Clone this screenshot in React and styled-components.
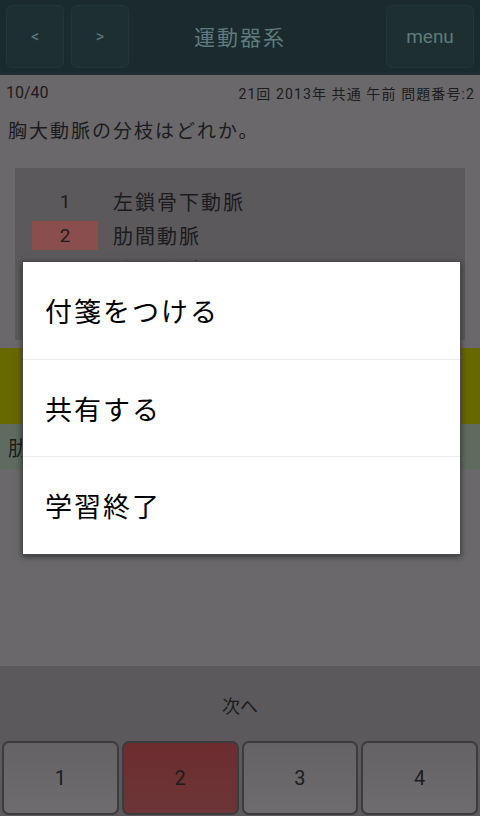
import styled, { createGlobalStyle } from "styled-components";

const GlobalStyle = createGlobalStyle`
  html, body {
    margin: 0;
    padding: 0;
    background: #6a686b;
  }
  * { box-sizing: border-box; }
`

const Screen = styled.div`
  position: relative;
  width: 480px;
  height: 816px;
  overflow: hidden;
  display: flex;
  flex-direction: column;
  background: #6a686b;
  font-family: Roboto, "Noto Sans CJK JP", sans-serif;
  color: #1c1b1d;
`
const Header = styled.div`
  height: 75px;
  background: #1b2a2d;
  border-bottom: 3px solid #1f3034;
  display: grid;
  grid-template-columns: 123px 1fr 123px;
  align-items: center;
  padding: 0 6px;
`
const NavGroup = styled.div`
  display: flex;
  gap: 7px;
  justify-content: ${p => (p.$right ? "flex-end" : "flex-start")};
`
const HeadButton = styled.div`
  width: ${p => p.$w}px;
  height: 63px;
  margin-top: 1px;
  border-radius: 6px;
  background: #1e2f32;
  border: 1px solid #22353a;
  display: flex;
  align-items: center;
  justify-content: center;
  color: #5e7b7e;
  font-size: ${p => p.$fs || 16}px;
`
const Title = styled.div`
  text-align: center;
  color: #5e7b7e;
  font-size: 21px;
  letter-spacing: 2px;
`
const InfoRow = styled.div`
  display: flex;
  justify-content: space-between;
  padding: 8px 6px 0;
  font-size: 14px;
  height: 28px;
  & > span + span { letter-spacing: 1.1px; margin-right: -1px; }
  & > span:first-child { font-size: 16px; }
`
const Question = styled.div`
  padding: 13px 8px 0;
  font-size: 19px;
  letter-spacing: 2px;
  height: 62px;
`
const Card = styled.div`
  margin: 3px 15px 0;
  height: 172px;
  background: #5b595c;
  padding-top: 16px;
`
const OptionRow = styled.div`
  display: flex;
  align-items: center;
  height: 34px;
  margin-left: 17px;
  font-size: 20px;
`
const OptNum = styled.div`
  width: 66px;
  height: 29px;
  display: flex;
  align-items: center;
  justify-content: center;
  font-size: 19px;
  background: ${p => (p.$sel ? "#8a4e4e" : "transparent")};
`
const OptText = styled.div`
  margin-left: 15px;
  letter-spacing: 2px;
`
const YellowBar = styled.div`
  margin-top: 8px;
  height: 76px;
  background: #686800;
`
const GreenBar = styled.div`
  height: 46px;
  background: #5e6b5e;
  display: flex;
  align-items: center;
  padding-left: 8px;
  font-size: 20px;
  letter-spacing: 2px;
`
const Spacer = styled.div`
  flex: 1;
`
const NextBar = styled.div`
  height: 75px;
  background: #5b595c;
  display: flex;
  align-items: center;
  justify-content: center;
  font-size: 18px;
  padding-top: 2px;
`
const AnswerRow = styled.div`
  height: 75px;
  display: grid;
  grid-template-columns: repeat(4, 1fr);
  gap: 3px;
  padding: 0 2px 1px;
  background: #5b595c;
`
const AnswerButton = styled.div`
  border: 2px solid #3c3b3e;
  border-radius: 7px;
  background: ${p => (p.$sel ? "linear-gradient(#6c2d2f, #6c3537)" : "linear-gradient(#646265, #6e6c6f)")};
  display: flex;
  align-items: center;
  justify-content: center;
  font-size: 20px;
`
const Overlay = styled.div`
  position: absolute;
  inset: 0;
  display: flex;
  justify-content: center;
  padding-top: 261px;
`
const Dialog = styled.div`
  width: 439px;
  height: 294px;
  margin-left: 3px;
  background: #ffffff;
  border: 1px solid #4a494c;
  box-shadow: 0 2px 6px rgba(0, 0, 0, 0.5);
  display: flex;
  flex-direction: column;
`
const DialogItem = styled.div`
  flex: 1;
  display: flex;
  align-items: center;
  padding-left: 22px;
  font-size: 27px;
  letter-spacing: 2px;
  color: #000;
  font-family: "Noto Sans CJK JP", sans-serif;
  & + & {
    border-top: 1px solid #ececec;
  }
`

const options = ["左鎖骨下動脈", "肋間動脈", "腕頭動脈"]

export default function App() {
  return (
    <>
      <GlobalStyle />
      <Screen>
        <Header>
          <NavGroup>
            <HeadButton $w={58}>&lt;</HeadButton>
            <HeadButton $w={58}>&gt;</HeadButton>
          </NavGroup>
          <Title>運動器系</Title>
          <NavGroup $right>
            <HeadButton $w={88} $fs={19}>menu</HeadButton>
          </NavGroup>
        </Header>
        <InfoRow>
          <span>10/40</span>
          <span>21回 2013年 共通 午前 問題番号:2</span>
        </InfoRow>
        <Question>胸大動脈の分枝はどれか。</Question>
        <Card>
          {options.map((o, i) => (
            <OptionRow key={o}>
              <OptNum $sel={i === 1}>{i + 1}</OptNum>
              <OptText>{o}</OptText>
            </OptionRow>
          ))}
        </Card>
        <YellowBar />
        <GreenBar>肋間動脈</GreenBar>
        <Spacer />
        <NextBar>次へ</NextBar>
        <AnswerRow>
          {[1, 2, 3, 4].map(n => (
            <AnswerButton key={n} $sel={n === 2}>{n}</AnswerButton>
          ))}
        </AnswerRow>
        <Overlay>
          <Dialog>
            <DialogItem>付箋をつける</DialogItem>
            <DialogItem>共有する</DialogItem>
            <DialogItem>学習終了</DialogItem>
          </Dialog>
        </Overlay>
      </Screen>
    </>
  )
}
